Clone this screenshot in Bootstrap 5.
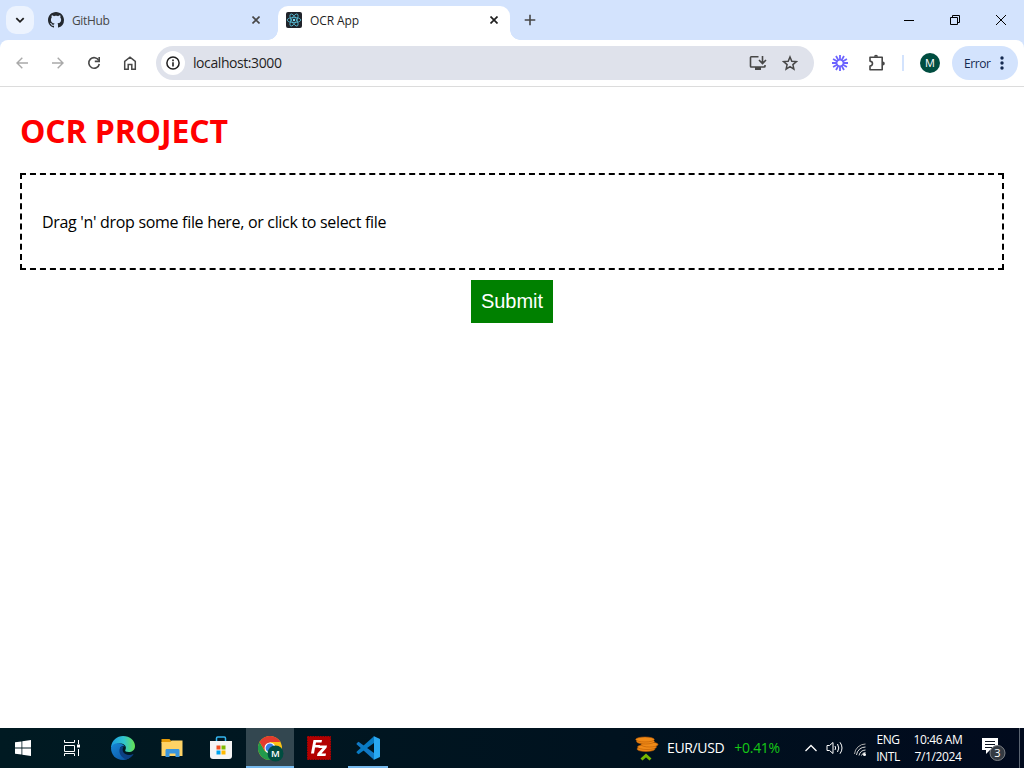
<!DOCTYPE html>
<html lang="en">
<head>
<meta charset="utf-8">
<meta name="viewport" content="width=device-width, initial-scale=1">
<title>OCR App</title>
<link href="https://cdn.jsdelivr.net/npm/bootstrap@5.3.0/dist/css/bootstrap.min.css" rel="stylesheet">
<style>
body{font-family:"Open Sans","Noto Sans",sans-serif;color:#000;line-height:1.3;overflow:hidden}
svg{display:block;flex:none}
.strip{height:40px;background:#d3e3fd;font-size:12px}
.tab-search{width:28px;height:28px;margin:6px 0 0 6px;border-radius:10px;background:#ecf3fe}
.tab-idle{width:222px;margin-left:14px;color:#474747}
.tab-live{width:232px;height:34px;margin:6px 0 0 8px;padding:0 8px;background:#fff;border-radius:10px 10px 0 0;color:#1f1f1f}
.tab-live::before,.tab-live::after{content:"";position:absolute;bottom:0;width:10px;height:10px}
.tab-live::before{left:-10px;background:radial-gradient(circle at 0 0,transparent 9.5px,#fff 10px)}
.tab-live::after{right:-10px;background:radial-gradient(circle at 100% 0,transparent 9.5px,#fff 10px)}
.win-btn{width:46px;height:40px}
.under{background:#d3e3fd}
.tools{height:47px;background:#fff;border-bottom:1px solid #dcdcdc;border-radius:8px 8px 0 0;padding:0 6px 0 4px}
.tool{width:36px;height:34px}
.address{width:658px;height:34px;margin-left:8px;background:#dfe2eb;border-radius:17px;padding:0 8px 0 5px}
.site{width:24px;height:24px;background:#fff}
.url{font-size:14px;margin-left:8px;color:#1f1f1f;letter-spacing:-.42px}
.avatar{width:20px;height:20px;background:#004d40;color:#fff;font-size:11px;margin-left:16px}
.error-pill{width:66px;height:34px;background:#d3e3fd;border-radius:17px;color:#14294f;font-size:12px;margin-left:12px;padding:0 10px 0 12px}
.page{height:641px;padding:20px;background:#fff}
.title{font-size:32px;font-weight:700;line-height:43px;color:red;letter-spacing:-.15px;margin:2px 0 21px;white-space:nowrap}
.drop{height:97px;border:2px dashed #000;padding:2px 20px 0}
.drop p{font-size:16px;letter-spacing:-.31px;white-space:nowrap}
.send{width:82px;height:43px;margin-top:10px;background:green;color:#fff;border:0;font:20px "Liberation Sans",Arial,sans-serif;padding:0}
.taskbar{height:40px;background:linear-gradient(90deg,#001a22,#00121f 60%,#010a1d);color:#fff;font-size:14px}
.task{width:49px;height:40px}
.live-app{width:48px;margin-left:1px;background:#334750;border-bottom:2px solid #76b9ed}
.open-app{position:relative}
.open-app::after{content:"";position:absolute;left:5px;right:4px;bottom:0;height:2px;background:#76b9ed}
.small-txt{font-size:12px;line-height:17px;white-space:nowrap}
.edge-line{width:1px;height:40px;background:#5b6471}
</style>
</head>
<body>
<header>
<div class="strip d-flex">
  <div class="tab-search d-flex align-items-center justify-content-center"><svg width="12" height="12" viewBox="0 0 12 12" fill="none" stroke="#1f1f1f" stroke-width="1.8"><path d="M2.3 4.2 6 7.8l3.7-3.6"/></svg></div>
  <div class="tab-idle d-flex align-items-center">
    <svg width="16" height="16" viewBox="0 0 16 16" fill="#24292f"><path d="M8 0C3.58 0 0 3.58 0 8c0 3.54 2.29 6.53 5.47 7.59.4.07.55-.17.55-.38 0-.19-.01-.82-.01-1.49-2.01.37-2.53-.49-2.69-.94-.09-.23-.48-.94-.82-1.13-.28-.15-.68-.52-.01-.53.63-.01 1.08.58 1.23.82.72 1.21 1.87.87 2.33.66.07-.52.28-.87.51-1.07-1.78-.2-3.64-.89-3.64-3.95 0-.87.31-1.59.82-2.15-.08-.2-.36-1.02.08-2.12 0 0 .67-.21 2.2.82.64-.18 1.32-.27 2-.27s1.36.09 2 .27c1.53-1.04 2.2-.82 2.2-.82.44 1.1.16 1.92.08 2.12.51.56.82 1.27.82 2.15 0 3.07-1.87 3.75-3.65 3.95.29.25.54.73.54 1.48 0 1.07-.01 1.93-.01 2.2 0 .21.15.46.55.38A8.01 8.01 0 0 0 16 8c0-4.42-3.58-8-8-8z"/></svg>
    <span class="ms-2" style="letter-spacing:-.35px;padding-top:2px">GitHub</span>
    <svg class="ms-auto" style="margin-right:10px" width="8" height="8" viewBox="0 0 8 8" stroke="#474747" stroke-width="1.6"><path d="m.5.5 7 7m0-7-7 7"/></svg>
  </div>
  <div class="tab-live position-relative d-flex align-items-center">
    <svg style="margin-top:-6px" width="16" height="16" viewBox="0 0 16 16"><rect width="16" height="16" rx="2" fill="#20232a"/><g fill="none" stroke="#56b8d0" stroke-width=".85"><ellipse cx="8" cy="8" rx="6.8" ry="2.6"/><ellipse cx="8" cy="8" rx="6.8" ry="2.6" transform="rotate(60 8 8)"/><ellipse cx="8" cy="8" rx="6.8" ry="2.6" transform="rotate(120 8 8)"/></g><circle cx="8" cy="8" r="1.2" fill="#7be1f8"/></svg>
    <span class="ms-2" style="margin-top:-4px;letter-spacing:-.1px">OCR App</span>
    <svg class="ms-auto" style="margin:-6px 4px 0 0" width="8" height="8" viewBox="0 0 8 8" stroke="#1f1f1f" stroke-width="1.7"><path d="m.5.5 7 7m0-7-7 7"/></svg>
  </div>
  <svg style="margin:14px 0 0 14px" width="12" height="12" viewBox="0 0 12 12" stroke="#474747" stroke-width="1.6"><path d="M6 .7v10.6M.7 6h10.6"/></svg>
  <div class="ms-auto d-flex">
    <div class="win-btn d-flex align-items-center justify-content-center"><svg width="10" height="10" viewBox="0 0 10 10"><path d="M0 5h10v1H0z"/></svg></div>
    <div class="win-btn d-flex align-items-center justify-content-center"><svg width="10" height="10" viewBox="0 0 10 10" fill="none" stroke="#000"><path d="M.5 2.5h7v7h-7zM2.5 2.5v-2h7v7h-2"/></svg></div>
    <div class="win-btn d-flex align-items-center justify-content-center"><svg width="10" height="10" viewBox="0 0 10 10" stroke="#000"><path d="m0 0 10 10M10 0 0 10"/></svg></div>
  </div>
</div>
<div class="under"><div class="tools d-flex align-items-center">
  <div class="tool d-flex align-items-center justify-content-center"><svg width="12" height="12" viewBox="0 0 12 12" fill="none" stroke="#a9a9a9" stroke-width="1.4"><path d="M12 6H1M6.3.7 1 6l5.3 5.3"/></svg></div>
  <div class="tool d-flex align-items-center justify-content-center"><svg width="12" height="12" viewBox="0 0 12 12" fill="none" stroke="#a9a9a9" stroke-width="1.4"><path d="M0 6h11M5.7.7 11 6l-5.3 5.3"/></svg></div>
  <div class="tool d-flex align-items-center justify-content-center"><svg width="14" height="14" viewBox="0 0 14 14" fill="none" stroke="#474747" stroke-width="1.6"><path d="M11.8 4.5A5.3 5.3 0 1 0 12.3 8"/><path d="M12.2 1v4.4H7.8"/></svg></div>
  <div class="tool d-flex align-items-center justify-content-center"><svg width="14" height="14" viewBox="0 0 14 14" fill="none" stroke="#474747" stroke-width="1.5"><path d="M1.7 13.2V5.4L7 1.2l5.3 4.2v7.8H8.8V8.5H5.2v4.7z"/></svg></div>
  <div class="address d-flex align-items-center">
    <div class="site rounded-circle d-flex align-items-center justify-content-center"><svg width="14" height="14" viewBox="0 0 14 14"><circle cx="7" cy="7" r="6.1" fill="none" stroke="#1f1f1f" stroke-width="1.5"/><path d="M6.2 6.2h1.6v4.2H6.2zM6.2 3.6h1.6v1.6H6.2z" fill="#1f1f1f"/></svg></div>
    <span class="url">localhost:3000</span>
    <svg class="ms-auto" width="18" height="16" viewBox="0 0 18 16" fill="none" stroke="#474747" stroke-width="1.6"><path d="M9.5 1.8H2.3a.8.8 0 0 0-.8.8v8.6c0 .5.3.8.8.8h12.9c.5 0 .8-.3.8-.8V10M13.5 1v7M10 5l3.5 3.5L17 5"/><path d="M6 12h6v3H6z" fill="#474747" stroke="none"/></svg>
    <svg style="margin:0 8px 0 15px" width="16" height="16" viewBox="0 0 16 16" fill="none" stroke="#474747" stroke-width="1.5"><path d="m8 2 1.8 4.2 4.6.4-3.5 3 1 4.5L8 11.7l-3.9 2.4 1-4.5-3.5-3 4.6-.4z"/></svg>
  </div>
  <svg style="margin-left:18px" width="16" height="16" viewBox="-8 -8 16 16" stroke="#6c63ff" stroke-width="1.8"><path id="ray" d="M0-3V-8M0 3V8M-3 0H-8M3 0H8"/><use href="#ray" transform="rotate(30)"/><use href="#ray" transform="rotate(60)"/><circle r="3.2" fill="none" stroke-width="1.2"/></svg>
  <svg style="margin-left:20px" width="18" height="18" viewBox="0 0 18 18" fill="none" stroke="#474747" stroke-width="1.6"><path d="M2 3.200h12.200v12.500H2v-3.600c3.300-.5 3.300-4.500 0-5z" stroke-linejoin="round"/><path d="M6 2.800a2 2 0 0 1 4 0zM14.800 7.500a2 2 0 0 1 0 4z" fill="#474747" stroke="none"/></svg>
  <div style="width:2px;height:16px;background:#d3e3fd;margin-left:16px"></div>
  <div class="avatar rounded-circle d-flex align-items-center justify-content-center">M</div>
  <div class="error-pill d-flex align-items-center justify-content-between"><span style="letter-spacing:-.45px;padding-top:1px">Error</span><svg width="12" height="16" viewBox="0 0 12 16" fill="#14294f"><circle cx="6" cy="3" r="1.7"/><circle cx="6" cy="8" r="1.7"/><circle cx="6" cy="13" r="1.7"/></svg></div>
</div></div>
</header>
<main class="page">
  <h1 class="title">OCR PROJECT</h1>
  <div class="drop d-flex align-items-center"><p class="m-0">Drag 'n' drop some file here, or click to select file</p></div>
  <button class="send d-block mx-auto" type="button">Submit</button>
</main>
<footer class="taskbar d-flex align-items-center">
  <div class="task d-flex align-items-center justify-content-center pe-1"><svg width="16" height="16" viewBox="0 0 16 16" fill="#fff"><path d="M0 2.3 6.5 1.4v6.2H0zM7.3 1.3 16 0v7.6H7.3zM0 8.4h6.5v6.2L0 13.7zM7.3 8.4H16V16l-8.7-1.3z"/></svg></div>
  <div class="task d-flex align-items-center" style="padding-left:15px"><svg width="16" height="16" viewBox="0 0 16 16" fill="none" stroke="#fff"><path d="M.5 0v2.500h10V0M.5 5.500h10v6H.5zM.5 16v-2.500h10V16M14.500 0v4M14.500 9v7"/><path d="M13 4.500h3v3h-3z" fill="#fff" stroke="none"/></svg></div>
  <div class="task d-flex align-items-center justify-content-center"><svg width="24" height="24" viewBox="0 0 24 24"><defs><linearGradient id="sea"><stop stop-color="#1b9de2"/><stop offset=".55" stop-color="#31c5cd"/><stop offset="1" stop-color="#66e34f"/></linearGradient><linearGradient id="deep" x2="1" y2="1"><stop stop-color="#1688d8"/><stop offset="1" stop-color="#0b4d9c"/></linearGradient></defs><path d="M0 11C1 4 6 0 12 0c7 0 12 4.600 12 10 0 4-3 6-6.300 6-2.700 0-4-1-3.400-2C16 11 14 8 10 7.500 6 7 2 9 0 12z" fill="url(#sea)"/><path d="M0 12c1-4 5-5.500 9-4.500 2 .4 4 1.500 4.800 3C9 9 8 13 10 16c3 4 8 4 12 2.500C19 22.500 15.500 24 12 24 5 24 0 19 0 12z" fill="url(#deep)"/><path d="M9 12c-2 4 1 10 6.500 11.400 3-1 5.500-3 7.200-5.400-4 2-9.500 1-10.700-2.500-.8-2-.3-3.300.5-4.500-1.500-.7-2.800 0-3.500 1z" fill="#0c3f82"/></svg></div>
  <div class="task d-flex align-items-center justify-content-center"><svg width="22" height="20" viewBox="0 0 22 20"><path d="M.5 1h8l2 2.500V5H.5z" fill="#e59b08"/><path d="M.5 4h9l1-1.500h11V18H.5z" fill="#ffd365"/><path d="M4.500 19v-6.500c0-1 .5-1.500 1.500-1.500h11c1 0 1.500.5 1.500 1.500V19h-4v-3.500h-6V19z" fill="#3a96dd"/></svg></div>
  <div class="task d-flex align-items-center justify-content-center"><svg width="24" height="24" viewBox="0 0 24 24"><path d="M7.500 6V2.200c0-.7.400-1.200 1.200-1.200h6.600c.8 0 1.200.5 1.200 1.200V6" fill="none" stroke="#35b6ef" stroke-width="1.500"/><path d="M1 5h22v15a3 3 0 0 1-3 3H4a3 3 0 0 1-3-3z" fill="#f5f5f5"/><path d="M7.500 9.500h4v4h-4z" fill="#f25022"/><path d="M12.500 9.500h4v4h-4z" fill="#7fba00"/><path d="M7.500 14.500h4v4h-4z" fill="#00a4ef"/><path d="M12.500 14.500h4v4h-4z" fill="#ffb900"/></svg></div>
  <div class="task live-app d-flex align-items-center justify-content-center"><svg style="margin:4px 0 0 2px" width="26" height="26" viewBox="0 0 26 26"><circle cx="12" cy="12" r="12" fill="#fbc116"/><path d="M1.600 6A12 12 0 0 0 12 24l5-9-5 3-5.200-3z" fill="#229a4c"/><path d="M1.600 6 7 15l5-9h10.400A12 12 0 0 0 1.600 6z" fill="#e33b2e"/><circle cx="12" cy="12" r="5.500" fill="#fff"/><circle cx="12" cy="12" r="4.400" fill="#367de8"/><circle cx="17.500" cy="17.500" r="8" fill="#004d40"/><text x="17.500" y="21" fill="#fff" font-size="9.500" font-weight="600" text-anchor="middle">M</text></svg></div>
  <div class="task d-flex align-items-center justify-content-center"><svg width="24" height="24" viewBox="0 0 24 24"><path d="M.5.5h23v23H.5z" fill="#b30000" stroke="#b30000" stroke-dasharray="1.500 1"/><path d="M4 17.500 6.500 4H15l-.5 2.500H9L8.500 9H13l-.5 2.500H8l-1 6zM12 9.500h8l-.5 2.300-5 5.700H19l-.5 2.500H10l.5-2.500 5-5.500H11.500z" fill="#fff"/></svg></div>
  <div class="task open-app d-flex align-items-center justify-content-center"><svg width="24" height="24" viewBox="0 0 24 24"><path d="m1 7 1.500-1.300L18 17v6.800L.8 8.500C.3 8 .5 7.500 1 7z" fill="#1179c5"/><path d="m1 17 1.500 1.300L18 7V.2L.8 15.500c-.5.500-.3 1 .2 1.500z" fill="#087bc4"/><path d="m17.500 0 6 2.700c.300.2.5.5.5.9v16.800c0 .4-.2.700-.5.900l-6 2.700c.5-.5.500-1 .5-1.500v-21c0-.5 0-1-.5-1.500z" fill="#29a8f2"/></svg></div>
  <svg style="margin-left:243px" width="24" height="26" viewBox="0 0 24 26"><g fill="#f08a17" stroke="#b95a05" stroke-width=".6"><ellipse cx="11" cy="14" rx="9" ry="2.500"/><ellipse cx="12" cy="12" rx="9.500" ry="2.500"/><ellipse cx="14.500" cy="9.500" rx="8.500" ry="2.500"/><ellipse cx="10.500" cy="6.500" rx="9" ry="2.500"/><ellipse cx="10" cy="4.500" rx="9.300" ry="2.500"/></g><path d="M6.500 24.500 11 20.500l4.500 4" fill="none" stroke="#76b900" stroke-width="3"/></svg>
  <span style="margin-left:8px;letter-spacing:-.35px">EUR/USD</span>
  <span style="margin-left:10px;color:#16c916;letter-spacing:-.3px">+0.41%</span>
  <div class="ms-auto d-flex align-items-center">
    <svg width="12" height="8" viewBox="0 0 12 8" fill="none" stroke="#fff" stroke-width="1.300"><path d="m.5 7 5.500-5.500L11.500 7"/></svg>
    <svg style="margin-left:9px" width="18" height="14" viewBox="0 0 18 14" fill="none" stroke="#fff"><path d="M1 4.500h2.500L7 1.500v11L3.500 9.500H1zM9 5q1.300 2 0 4M11.500 3q2.600 4 0 8M14 1.300q4 5.700 0 11.400"/></svg>
    <svg style="margin:2px 0 0 10px" width="12" height="14" viewBox="0 0 12 14" fill="none" stroke="#aaa"><path d="M.5 12A11 11 0 0 1 11.500 2"/><path d="M2.500 13A9 9 0 0 1 11.500 5M5 13.500A7 7 0 0 1 11.500 8M7.500 13.500a4.500 4.500 0 0 1 4-3" stroke="#ddd"/><circle cx="10.500" cy="12.500" r="1.500" fill="#fff" stroke="none"/></svg>
    <div class="small-txt text-center" style="width:26px;margin-left:9px;letter-spacing:-.4px">ENG<br>INTL</div>
    <div class="small-txt text-center" style="width:52px;margin-left:11px;letter-spacing:-.4px">10:46 AM<br>7/1/2024</div>
    <svg style="margin:4px 12px 0 17px" width="26" height="26" viewBox="0 0 26 26"><path d="M1 1h16v12H9l-4 4v-4H1z" fill="#fff"/><path d="M4 4.500h10M4 7.500h10M4 10.500h7" stroke="#0b1320"/><circle cx="16.500" cy="16" r="7.500" fill="#343a42" stroke="#7d8085"/><text x="16.500" y="20" fill="#fff" font-size="11" text-anchor="middle">3</text></svg>
    <div class="edge-line" style="margin-right:4px"></div>
  </div>
</footer>
<script src="https://cdn.jsdelivr.net/npm/bootstrap@5.3.0/dist/js/bootstrap.bundle.min.js"></script>
</body>
</html>
